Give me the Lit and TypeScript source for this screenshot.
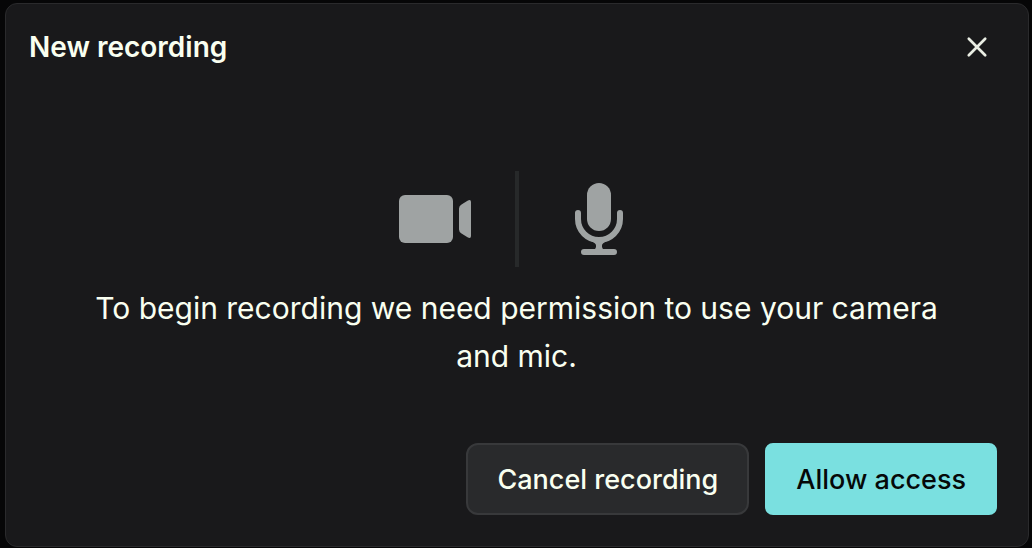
import { LitElement, html, css } from "lit";
import { customElement } from "lit/decorators.js";

@customElement("app-root")
export class AppRoot extends LitElement {
  static styles = css`
    :host {
      display: flex;
      box-sizing: border-box;
      min-height: 100vh;
      padding: 3px 3px 1px 5px;
      background: #060607;
      font-family: Inter, "Liberation Sans", sans-serif;
      color: #f9fff0;
    }
    .dialog {
      flex: 1;
      display: flex;
      flex-direction: column;
      box-sizing: border-box;
      padding: 15px 31px 31px 23px;
      border: 1px solid #2a2a2c;
      border-radius: 12px;
      background: #19191b;
    }
    .header {
      display: flex;
      align-items: center;
      justify-content: space-between;
      height: 56px;
    }
    h1 {
      margin: 0;
      font-size: 28px;
      line-height: 40px;
      font-weight: 600;
    }
    button {
      font: inherit;
      cursor: pointer;
    }
    .close {
      display: flex;
      padding: 8px;
      border: 0;
      background: none;
      color: #eaeee4;
    }
    .body {
      flex: 1;
      display: flex;
      flex-direction: column;
      align-items: center;
      justify-content: center;
      gap: 17px;
      padding: 32px 48px 0 55px;
    }
    .devices {
      display: flex;
      align-items: center;
      gap: 32px;
      color: #9fa3a3;
    }
    .divider {
      width: 4px;
      height: 96px;
      background: #27292a;
    }
    svg {
      display: block;
    }
    p {
      margin: 0;
      font-size: 30px;
      line-height: 48px;
      text-align: center;
    }
    .actions {
      display: flex;
      justify-content: flex-end;
      gap: 16px;
    }
    .action {
      box-sizing: border-box;
      height: 72px;
      padding: 0 29px;
      border: 2px solid #38393b;
      border-radius: 12px;
      background: #292a2c;
      color: inherit;
      font-size: 27px;
      font-weight: 500;
    }
    .primary {
      border-color: #7ae0e0;
      border-radius: 8px;
      background: #7ae0e0;
      color: #050808;
    }
  `;

  render() {
    return html`
      <section class="dialog" role="dialog" aria-labelledby="title">
        <header class="header">
          <h1 id="title">New recording</h1>
          <button class="close" aria-label="Close">
            <svg width="24" height="24" viewBox="0 0 24 24" fill="none" stroke="currentColor" stroke-width="2.7" stroke-linecap="round">
              <path d="M3.8 3.8l16.4 16.4M20.2 3.8L3.8 20.2" />
            </svg>
          </button>
        </header>
        <div class="body">
          <div class="devices">
            <svg width="96" height="96" viewBox="0 0 96 96" fill="currentColor">
              <rect x="12" y="24" width="54" height="48" rx="6" />
              <path d="M72 37.5q0-2.5 2.5-4l6-3.8Q84 28 84 31v34q0 3-3.5 1.300l-6-3.800q-2.500-1.500-2.500-4z" />
            </svg>
            <div class="divider"></div>
            <svg width="96" height="96" viewBox="0 0 96 96" fill="currentColor">
              <rect x="36" y="12" width="24" height="48" rx="12" />
              <path d="M27 42v6a21 21 0 0 0 42 0v-6M48 69v12M33 81h30" fill="none" stroke="currentColor" stroke-width="6" stroke-linecap="round" />
              <path d="M40 70q5 2 5 4.500v1.500q0 2-3 3h12q-3-1-3-3v-1.500q0-2.500 5-4.500z" />
            </svg>
          </div>
          <p>To begin recording we need permission to use your camera and mic.</p>
        </div>
        <footer class="actions">
          <button class="action">Cancel recording</button>
          <button class="action primary">Allow access</button>
        </footer>
      </section>
    `;
  }
}
